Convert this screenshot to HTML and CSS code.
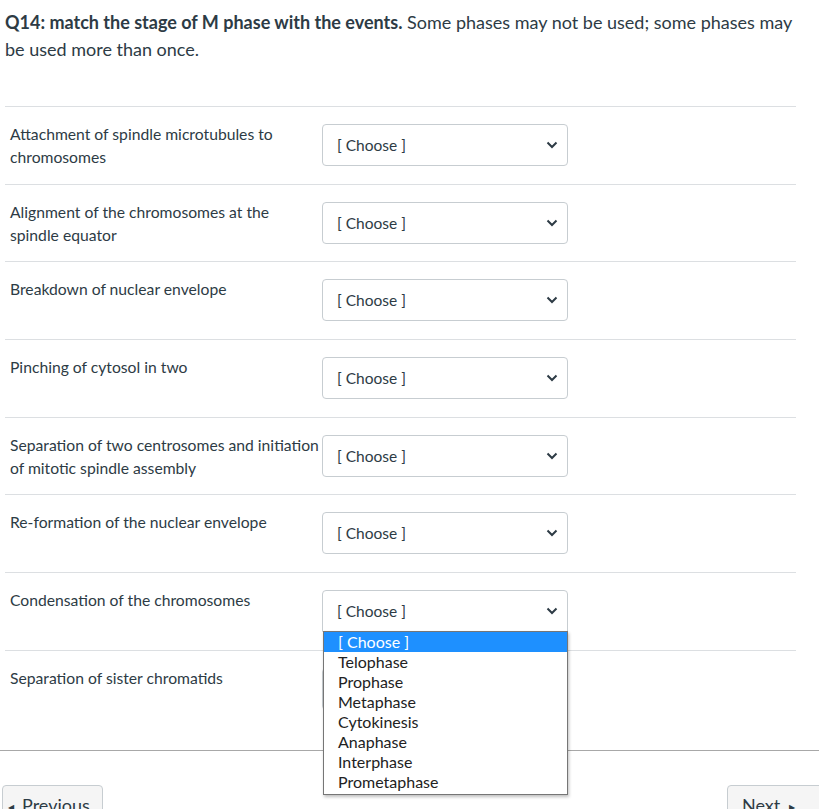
FILE: index.html
```html
<!DOCTYPE html>
<html>
<head>
<meta charset="utf-8">
<link rel="stylesheet" href="styles.css">
</head>
<body>
<div class="page">
  <p class="question"><strong>Q14: match the stage of M phase with the events.</strong> Some phases may not be used; some phases may be used more than once.</p>
  <div class="matches">
    <div class="row">
      <div class="label">Attachment of spindle microtubules to chromosomes</div>
      <div class="select-wrap"><div class="select"><span>[ Choose ]</span><svg class="chev" viewBox="0 0 12 8" width="12" height="8"><path d="M1.5 1.5 L6 6 L10.5 1.5" fill="none" stroke="#2d3b45" stroke-width="2"/></svg></div></div>
    </div>
    <div class="row">
      <div class="label">Alignment of the chromosomes at the spindle equator</div>
      <div class="select-wrap"><div class="select"><span>[ Choose ]</span><svg class="chev" viewBox="0 0 12 8" width="12" height="8"><path d="M1.5 1.5 L6 6 L10.5 1.5" fill="none" stroke="#2d3b45" stroke-width="2"/></svg></div></div>
    </div>
    <div class="row">
      <div class="label">Breakdown of nuclear envelope</div>
      <div class="select-wrap"><div class="select"><span>[ Choose ]</span><svg class="chev" viewBox="0 0 12 8" width="12" height="8"><path d="M1.5 1.5 L6 6 L10.5 1.5" fill="none" stroke="#2d3b45" stroke-width="2"/></svg></div></div>
    </div>
    <div class="row">
      <div class="label">Pinching of cytosol in two</div>
      <div class="select-wrap"><div class="select"><span>[ Choose ]</span><svg class="chev" viewBox="0 0 12 8" width="12" height="8"><path d="M1.5 1.5 L6 6 L10.5 1.5" fill="none" stroke="#2d3b45" stroke-width="2"/></svg></div></div>
    </div>
    <div class="row">
      <div class="label">Separation of two centrosomes and initiation of mitotic spindle assembly</div>
      <div class="select-wrap"><div class="select"><span>[ Choose ]</span><svg class="chev" viewBox="0 0 12 8" width="12" height="8"><path d="M1.5 1.5 L6 6 L10.5 1.5" fill="none" stroke="#2d3b45" stroke-width="2"/></svg></div></div>
    </div>
    <div class="row">
      <div class="label">Re-formation of the nuclear envelope</div>
      <div class="select-wrap"><div class="select"><span>[ Choose ]</span><svg class="chev" viewBox="0 0 12 8" width="12" height="8"><path d="M1.5 1.5 L6 6 L10.5 1.5" fill="none" stroke="#2d3b45" stroke-width="2"/></svg></div></div>
    </div>
    <div class="row">
      <div class="label">Condensation of the chromosomes</div>
      <div class="select-wrap"><div class="select open"><span>[ Choose ]</span><svg class="chev" viewBox="0 0 12 8" width="12" height="8"><path d="M1.5 1.5 L6 6 L10.5 1.5" fill="none" stroke="#2d3b45" stroke-width="2"/></svg></div>
        <ul class="dropdown">
          <li class="selected">[ Choose ]</li>
          <li>Telophase</li>
          <li>Prophase</li>
          <li>Metaphase</li>
          <li>Cytokinesis</li>
          <li>Anaphase</li>
          <li>Interphase</li>
          <li>Prometaphase</li>
        </ul>
      </div>
    </div>
    <div class="row">
      <div class="label">Separation of sister chromatids</div>
      <div class="select-wrap"><div class="select"><span>[ Choose ]</span><svg class="chev" viewBox="0 0 12 8" width="12" height="8"><path d="M1.5 1.5 L6 6 L10.5 1.5" fill="none" stroke="#2d3b45" stroke-width="2"/></svg></div></div>
    </div>
  </div>
</div>
<div class="footer">
  <button class="btn prev"><span class="tri">&#9664;</span>Previous</button>
  <button class="btn next">Next<span class="tri">&#9654;</span></button>
</div>
</body>
</html>
```
FILE: styles.css
```css
html, body {
  margin: 0;
  padding: 0;
  background: #fff;
}
body {
  font-family: Lato, "Open Sans", sans-serif;
  color: #2d3b45;
  overflow: hidden;
  height: 809px;
}
.page {
  padding-left: 5px;
  width: 791px;
}
.question {
  margin: 9px 0 0 0;
  font-size: 18px;
  line-height: 27px;
}
.question strong {
  font-weight: 700;
}
.matches {
  margin-top: 43px;
}
.row {
  display: flex;
  align-items: flex-start;
  box-sizing: border-box;
  height: 77.7px;
  border-top: 1px solid #dcdfe2;
  padding: 17px 0 0 5px;
}
.label {
  width: 311px;
  margin-right: 1px;
  font-size: 15.7px;
  line-height: 23px;
  margin-top: -1px;
}
.select-wrap {
  position: relative;
}
.select {
  box-sizing: border-box;
  width: 246px;
  height: 42px;
  border: 1px solid #c7cdd1;
  border-radius: 4px;
  display: flex;
  align-items: center;
  justify-content: space-between;
  padding: 0 9px 0 14px;
  font-size: 15.5px;
  background: #fff;
}
.select.open {
  border-bottom-left-radius: 0;
  border-bottom-right-radius: 0;
}
.chev {
  display: block;
}
.dropdown {
  position: absolute;
  top: 41px;
  left: 1px;
  width: 245px;
  box-sizing: border-box;
  margin: 0;
  padding: 0 0 2px 0;
  list-style: none;
  background: #fff;
  border: 1px solid #767676;
  box-shadow: 1px 2px 3px rgba(0,0,0,0.25);
  font-size: 16px;
  z-index: 5;
}
.dropdown li {
  height: 20px;
  line-height: 19px;
  padding-left: 14px;
  color: #222;
}
.dropdown li.selected {
  background: #1e90ff;
  color: #fff;
}
.footer {
  margin-top: 22px;
  border-top: 1px solid #a8a8a8;
  display: flex;
  justify-content: space-between;
  align-items: flex-start;
  padding: 34px 0 0 2px;
}
.btn {
  font-family: Lato, "Open Sans", sans-serif;
  font-size: 18px;
  color: #2d3b45;
  background: #f5f5f5;
  border: 1px solid #c7cdd1;
  border-radius: 4px;
  height: 40px;
  padding: 8px 10px 0 5px;
  display: flex;
  align-items: flex-start;
  gap: 8px;
  line-height: 22px;
}
.btn.prev {
  width: 101px;
}
.btn.next {
  width: 100px;
  padding-left: 14px;
  gap: 9px;
  margin-right: -8px;
}
.tri {
  font-size: 8px;
  line-height: 22px;
  padding-top: 2px;
}
```
